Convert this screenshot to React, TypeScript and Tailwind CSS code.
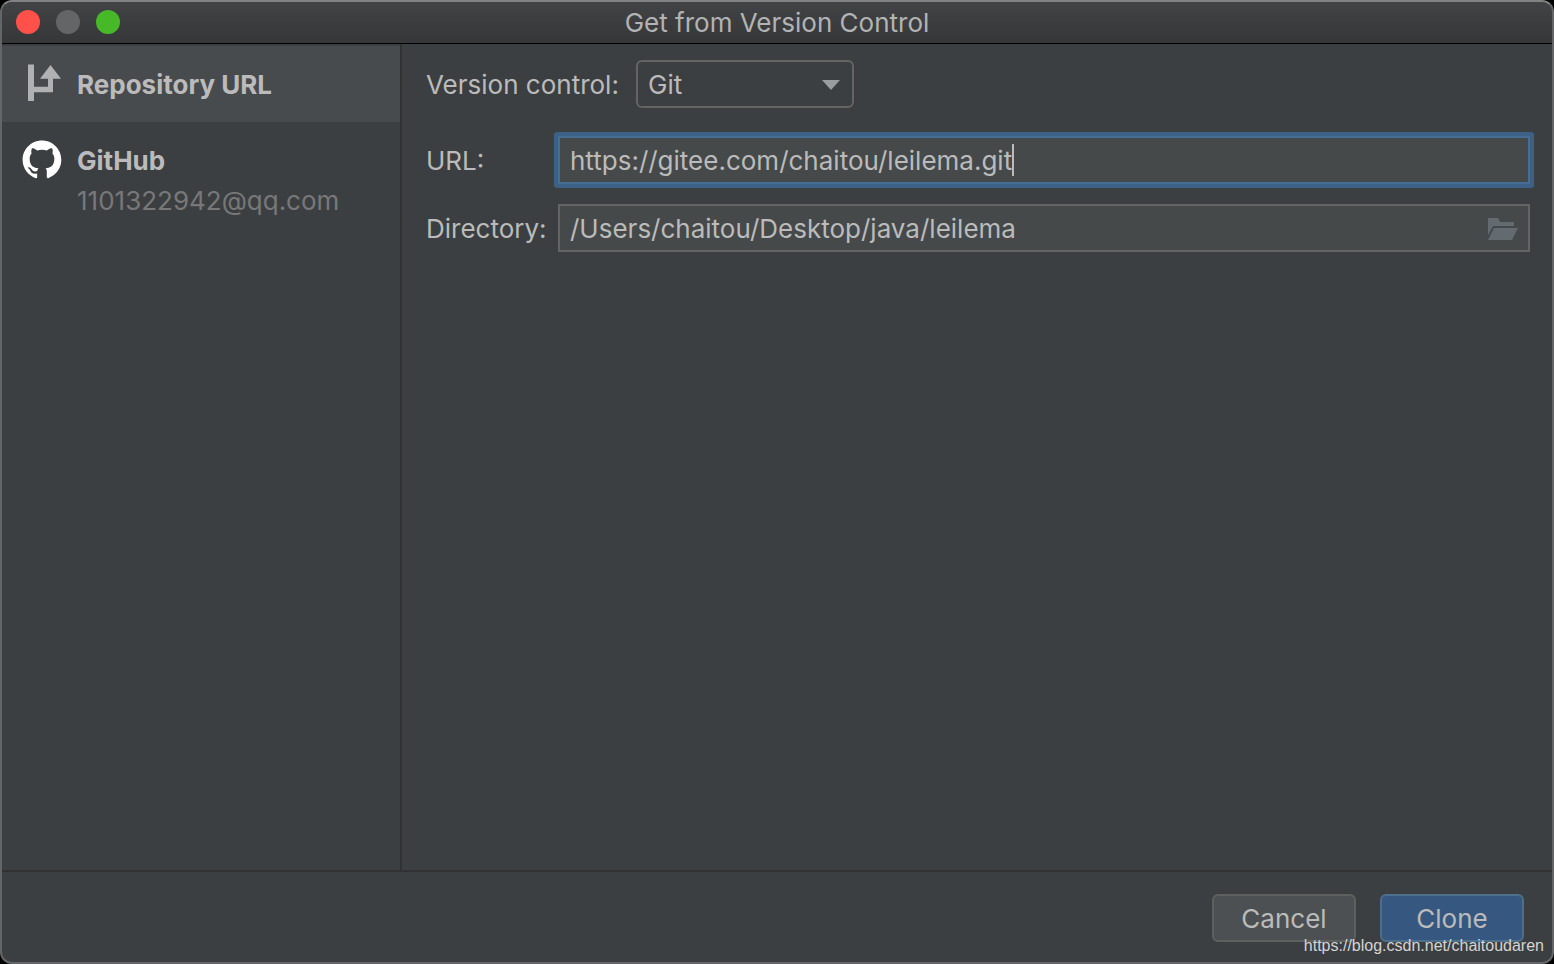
import { useState } from 'react';

const PROVIDERS = [
  { id: 'url', name: 'Repository URL', account: '' },
  { id: 'github', name: 'GitHub', account: '1101322942@qq.com' },
];

const RepositoryIcon = () => (
  <svg className="size-10" viewBox="0 0 40 40" fill="#afb1b3" aria-hidden="true">
    <path d="M6 .5h6v22.3h14v-8H18L28.5 1 39 14.8h-8v13.4H12V37H6z" />
  </svg>
);

const GitHubIcon = () => (
  <svg className="size-10" viewBox="0 0 40 40" fill="#ffffff" aria-hidden="true">
    <g transform="translate(0.6 0.4) scale(2.42)">
      <path d="M8 0C3.58 0 0 3.58 0 8c0 3.54 2.29 6.53 5.47 7.59.4.07.55-.17.55-.38 0-.19-.01-.82-.01-1.49-2.01.37-2.53-.49-2.69-.94-.09-.23-.48-.94-.82-1.13-.28-.15-.68-.52-.01-.53.63-.01 1.08.58 1.23.82.72 1.21 1.87.87 2.33.66.07-.52.28-.87.51-1.07-1.78-.2-3.64-.89-3.64-3.95 0-.87.31-1.59.82-2.15-.08-.2-.36-1.02.08-2.12 0 0 .67-.21 2.2.82.64-.18 1.32-.27 2-.27s1.36.09 2 .27c1.53-1.04 2.2-.82 2.2-.82.44 1.1.16 1.92.08 2.12.51.56.82 1.27.82 2.15 0 3.07-1.87 3.75-3.65 3.95.29.25.54.73.54 1.48 0 1.07-.01 1.93-.01 2.2 0 .21.15.46.55.38A8.01 8.01 0 0 0 16 8c0-4.42-3.58-8-8-8z" />
    </g>
  </svg>
);

const FolderIcon = () => (
  <svg className="h-6 w-8" viewBox="0 0 32 24" fill="#636b70" aria-hidden="true">
    <path d="M2 1h10l2 4h14v4H7L2 18z" />
    <path d="M8 11h24l-6 12H2z" />
  </svg>
);

const TitleBar = () => (
  <header className="relative flex h-[42px] shrink-0 items-center justify-center border-b border-black bg-linear-to-b from-[#424345] to-[#363739]">
    <div className="absolute top-2 left-3.5 flex gap-4">
      <button aria-label="Close" className="size-6 rounded-full bg-[#ff5149]" />
      <button aria-label="Minimize" className="size-6 rounded-full bg-[#646567]" />
      <button aria-label="Zoom" className="size-6 rounded-full bg-[#47b929]" />
    </div>
    <h1 className="text-[#b2b3b4]">Get from Version Control</h1>
  </header>
);

const App = () => {
  const [provider, setProvider] = useState('url');
  const [url, setUrl] = useState('https://gitee.com/chaitou/leilema.git');
  const [directory, setDirectory] = useState('/Users/chaitou/Desktop/java/leilema');

  return (
    <div className="bg-black font-['Inter',sans-serif] text-[26px] leading-8 text-[#bbbbbb]">
      <div className="relative flex min-h-screen flex-col overflow-hidden rounded-xl border-2 border-[#636567] border-t-[#808283] bg-[#3c3f41]">
        <TitleBar />

        <main className="flex grow">
          <nav className="w-[400px] shrink-0 border-r-2 border-[#323232] pt-0.5">
            {PROVIDERS.map((item) => (
              <button
                key={item.id}
                onClick={() => setProvider(item.id)}
                className={`flex w-full gap-[15px] px-5 py-[18px] text-left ${
                  provider === item.id ? 'bg-[#484b4d]' : ''
                }`}
              >
                {item.id === 'github' ? <GitHubIcon /> : <RepositoryIcon />}
                <span className="-mb-0.5 flex flex-col pt-px leading-10">
                  <span className="font-bold">{item.name}</span>
                  {item.account && <span className="text-[#787878]">{item.account}</span>}
                </span>
              </button>
            ))}
          </nav>

          <form className="grow pt-4 pr-[22px] pl-6" onSubmit={(e) => e.preventDefault()}>
            <div className="flex items-center">
              <label htmlFor="vcs" className="w-[210px] shrink-0 pt-0.5">
                Version control:
              </label>
              <div className="relative">
                <select
                  id="vcs"
                  className="h-12 w-[218px] appearance-none rounded-md border-2 border-[#646464] bg-[#3c3f41] pt-0.5 pl-2.5 outline-none"
                >
                  <option>Git</option>
                </select>
                <svg
                  className="pointer-events-none absolute top-5 right-3.5 h-2.5 w-[18px]"
                  viewBox="0 0 18 10"
                  fill="#9a9da0"
                  aria-hidden="true"
                >
                  <path d="M0 0h18L9 10z" />
                </svg>
              </div>
            </div>

            <div className="mt-7 flex items-center">
              <label htmlFor="url" className="w-[132px] shrink-0 pt-0.5">
                URL:
              </label>
              <div className="flex h-12 grow items-center overflow-hidden rounded-[1px] border-2 border-[#466d94] bg-[#45494a] px-2.5 ring-4 ring-[#3d6185]">
                <input
                  id="url"
                  type="text"
                  value={url}
                  onChange={(e) => setUrl(e.target.value)}
                  className="field-sizing-content pt-0.5 caret-transparent outline-none"
                />
                <span className="h-8 w-0.5 bg-[#bbbbbb]" />
              </div>
            </div>

            <div className="mt-5 flex items-center">
              <label htmlFor="directory" className="w-[132px] shrink-0 pt-0.5">
                Directory:
              </label>
              <div className="flex h-12 grow items-center border-2 border-[#646464] bg-[#45494a] px-2.5">
                <input
                  id="directory"
                  type="text"
                  value={directory}
                  onChange={(e) => setDirectory(e.target.value)}
                  className="min-w-0 grow pt-0.5 outline-none"
                />
                <button type="button" aria-label="Browse" className="pt-0.5">
                  <FolderIcon />
                </button>
              </div>
            </div>
          </form>
        </main>

        <footer className="flex justify-end gap-6 border-t-2 border-[#323232] pt-[22px] pr-7 pb-5">
          <button className="h-12 w-36 rounded-md border-2 border-[#5e6060] bg-[#4c5052] pt-0.5">Cancel</button>
          <button className="h-12 w-36 rounded-md border-2 border-[#4c708c] bg-[#365880] pt-0.5">Clone</button>
        </footer>

        <a
          href="https://blog.csdn.net/chaitoudaren"
          className="absolute right-2 bottom-1.5 font-['Liberation_Sans',sans-serif] text-base leading-5 text-[#d4d4d4]"
        >
          https://blog.csdn.net/chaitoudaren
        </a>
      </div>
    </div>
  );
};

export default App;
